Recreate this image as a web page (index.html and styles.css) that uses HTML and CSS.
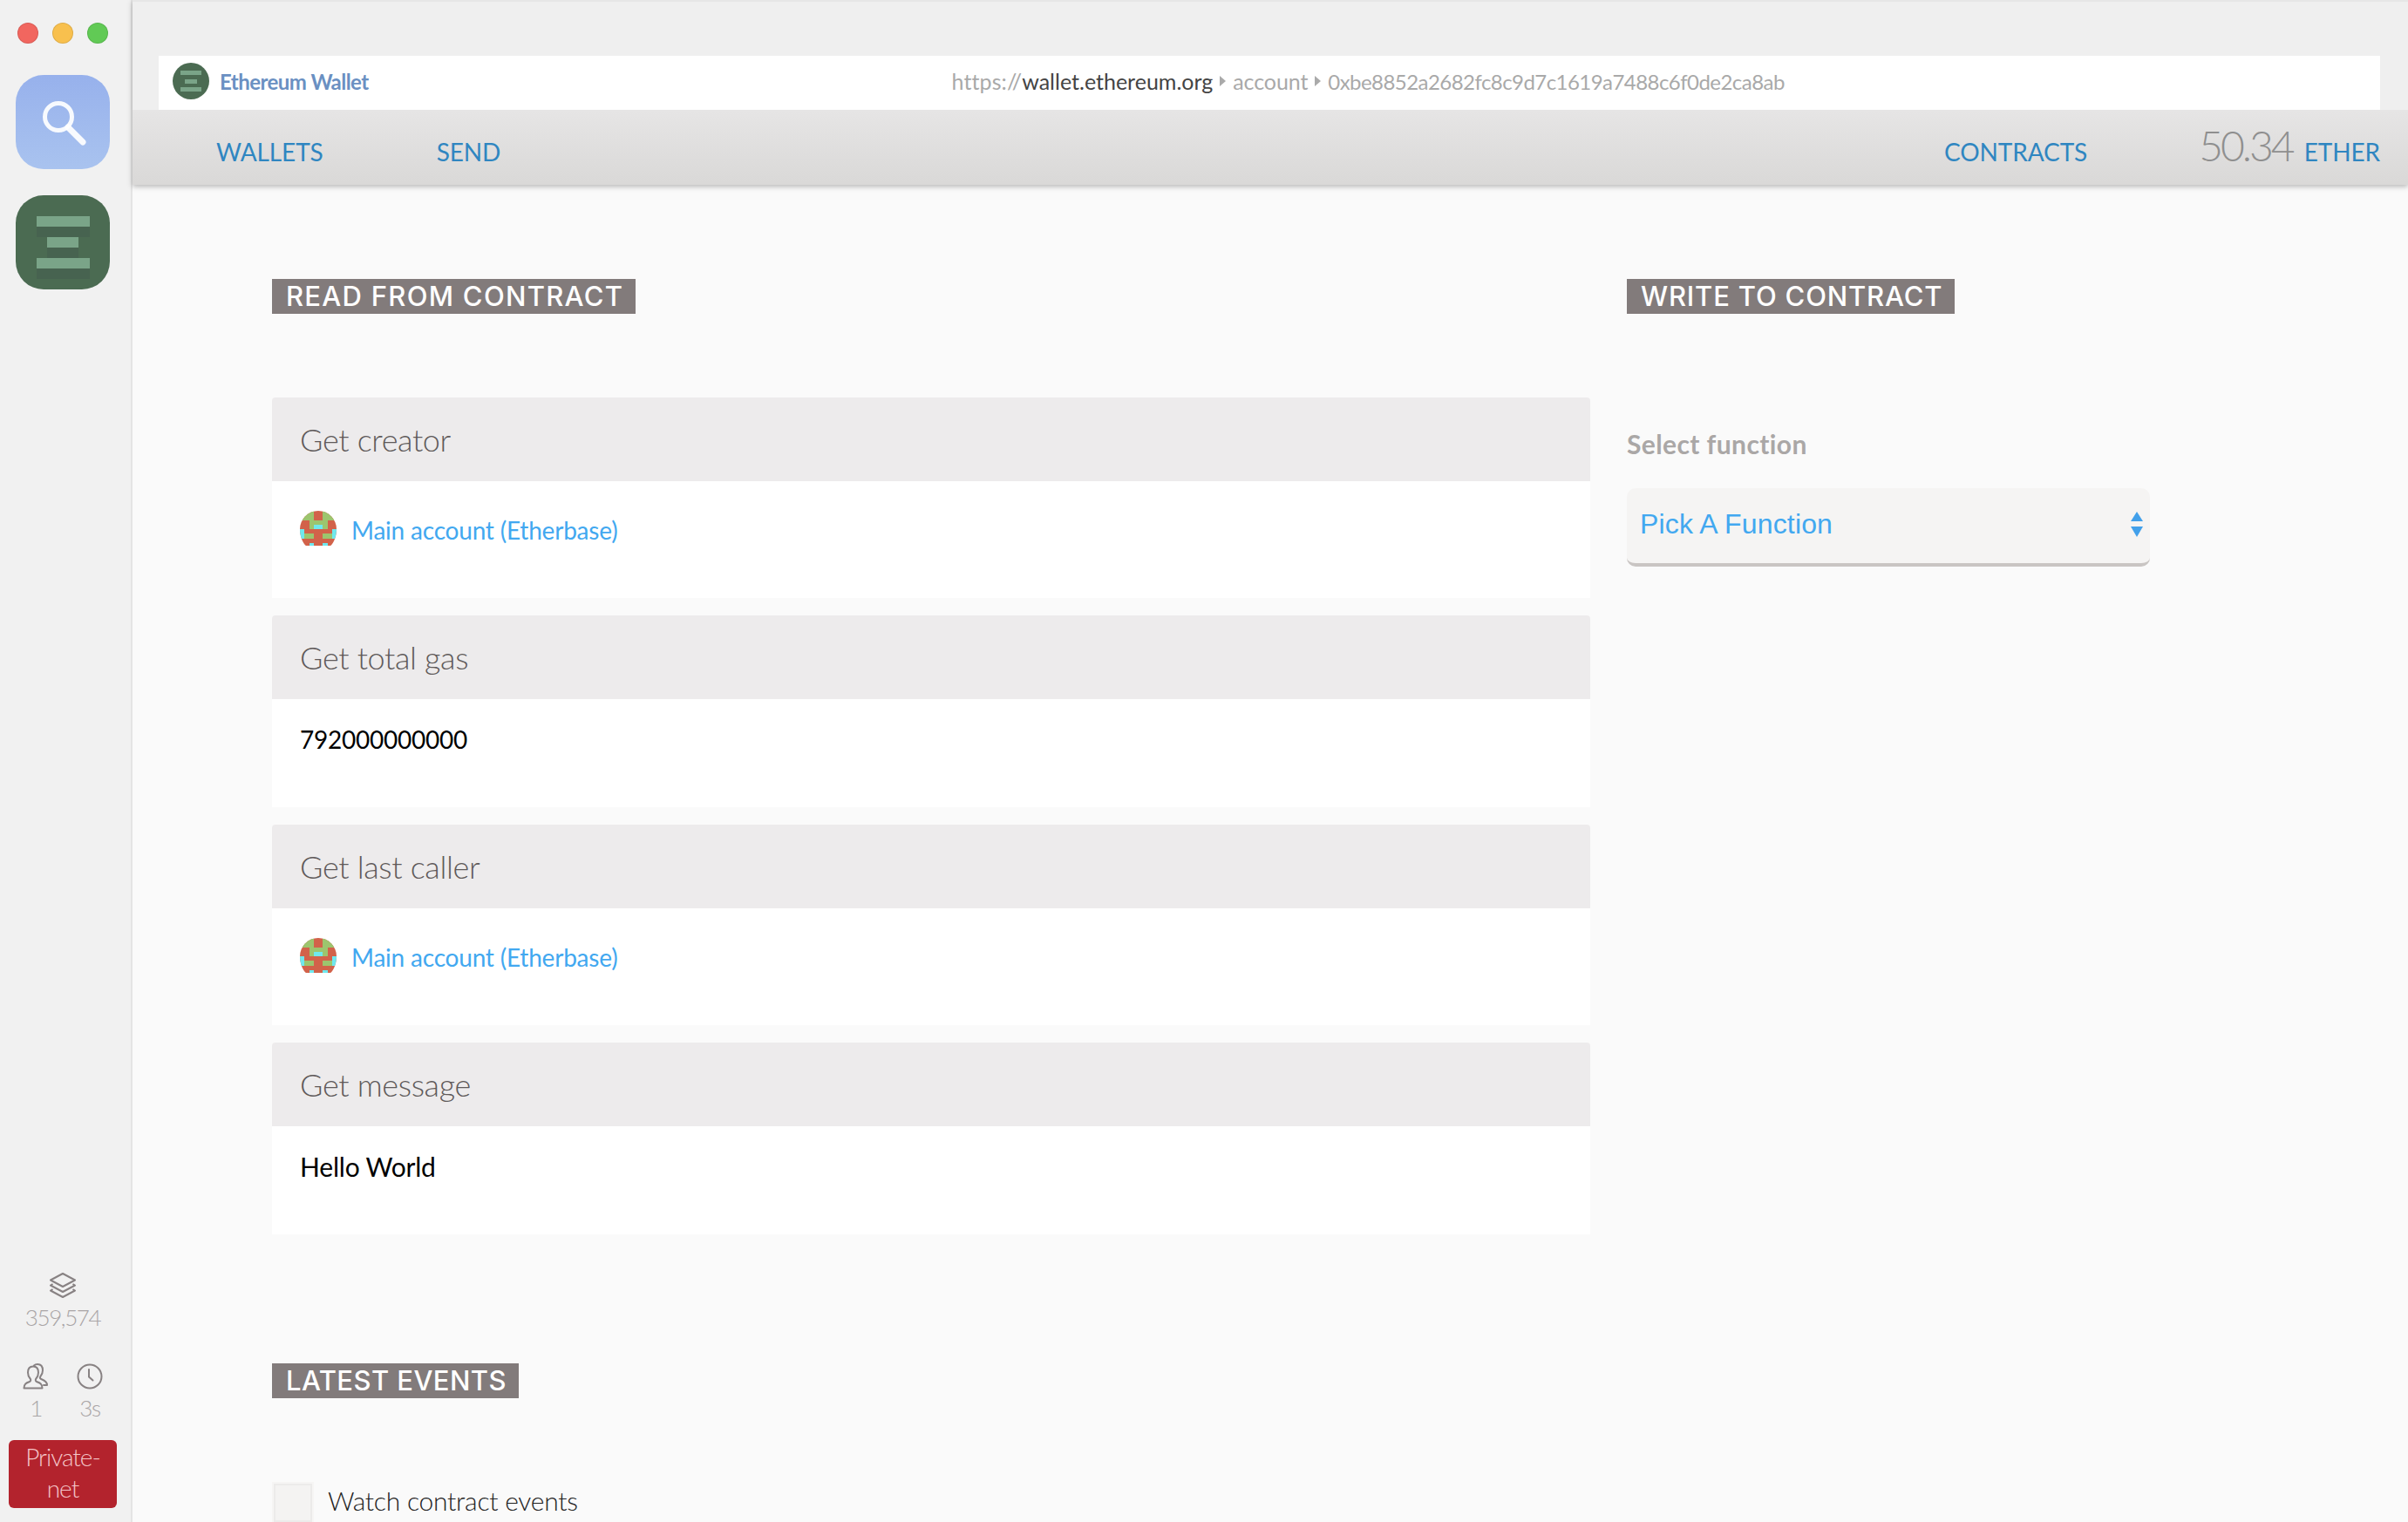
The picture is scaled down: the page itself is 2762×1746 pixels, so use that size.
FILE: index.html
```html
<!DOCTYPE html>
<html lang="en">
<head>
<meta charset="utf-8">
<title>Ethereum Wallet</title>
<link rel="stylesheet" href="styles.css">
</head>
<body>
<svg class="defs" width="0" height="0" aria-hidden="true">
  <defs>
    <clipPath id="idclip"><path d="M0 4a4 4 0 0 1 8 0v0c0 1.4-.5 2.9-1.3 3.62H1.3C.5 6.9 0 5.4 0 4z"/></clipPath>
    <symbol id="identicon" viewBox="0 0 8 8" shape-rendering="crispEdges">
      <g clip-path="url(#idclip)">
        <rect width="8" height="8" fill="#d2624a"/>
        <rect x="0" y="0" width="3" height="2" fill="#9cc56e"/>
        <rect x="5" y="0" width="3" height="2" fill="#9cc56e"/>
        <rect x="2" y="2" width="4" height="1" fill="#9cc56e"/>
        <rect x="2" y="3" width="1" height="1" fill="#9cc56e"/>
        <rect x="5" y="3" width="1" height="1" fill="#9cc56e"/>
        <rect x="3" y="3" width="2" height="1" fill="#6fe8ee"/>
        <rect x="0" y="4" width="1" height="2" fill="#6fe8ee"/>
        <rect x="7" y="4" width="1" height="2" fill="#6fe8ee"/>
        <rect x="1" y="5" width="2" height="1" fill="#9cc56e"/>
        <rect x="5" y="5" width="2" height="1" fill="#9cc56e"/>
        <rect x="2" y="7" width="1" height="1" fill="#6fe8ee"/>
        <rect x="5" y="7" width="1" height="1" fill="#6fe8ee"/>
      </g>
    </symbol>
  </defs>
</svg>
<div class="app">
  <aside class="sidebar">
    <div class="lights">
      <span class="light light-red"></span>
      <span class="light light-yellow"></span>
      <span class="light light-green"></span>
    </div>
    <div class="tab tab-search">
      <svg class="search-icon" width="108" height="108" viewBox="0 0 108 108">
        <circle cx="49" cy="48" r="15.5" fill="none" stroke="#fff" stroke-opacity=".92" stroke-width="5"/>
        <path d="M60 60l17 17" stroke="#fff" stroke-opacity=".92" stroke-width="7" stroke-linecap="round"/>
      </svg>
    </div>
    <div class="tab tab-wallet">
      <svg width="108" height="108" viewBox="0 0 108 108" shape-rendering="crispEdges">
        <rect x="23.500" y="36" width="61" height="12" fill="#476350"/>
        <rect x="36" y="60" width="36" height="12" fill="#476350"/>
        <rect x="23.500" y="84" width="61" height="12" fill="#476350"/>
        <rect x="23.500" y="24" width="61" height="12" fill="#7aa488"/>
        <rect x="36" y="48" width="36" height="12" fill="#7aa488"/>
        <rect x="23.500" y="72" width="61" height="12" fill="#7aa488"/>
      </svg>
    </div>
    <div class="stats">
      <div class="stat">
        <svg width="30" height="30" viewBox="0 0 30 30" fill="none" stroke="#888283" stroke-width="2" stroke-linejoin="round">
          <path d="M15 1L29 8.500 15 16 1 8.500z"/>
          <path d="M3.500 13L1 14.500 15 22l14-7.500-2.500-1.500"/>
          <path d="M3.500 19L1 20.500 15 28l14-7.500-2.500-1.500"/>
        </svg>
        <span class="stat-value">359,574</span>
      </div>
      <div class="stat-row">
        <div class="stat">
          <svg width="30" height="30" viewBox="0 0 30 30" fill="none" stroke="#888283" stroke-width="2" stroke-linejoin="round" stroke-linecap="round">
            <path d="M1.500 28.500c0-5 2.500-6 6.500-7.500 1.500-.6 1.500-2.500.6-3.500C7 15.700 6 13.500 6 10.500 6 6 8.500 3.500 12 3.500s6 2.500 6 7c0 3-1 5.200-2.600 7-.9 1-.9 2.900.6 3.500 4 1.500 6.500 2.500 6.500 7.500z"/>
            <path d="M13 2.500C14 1.500 15.500 1 17 1c3.500 0 6 2.500 6 7 0 3-1 5.200-2.600 7-.6.8-.7 2 .3 2.800 3 1.200 7.300 2.200 7.300 7.200h-4"/>
          </svg>
          <span class="stat-value">1</span>
        </div>
        <div class="stat">
          <svg width="30" height="30" viewBox="0 0 30 30" fill="none" stroke="#888283" stroke-width="2" stroke-linecap="round">
            <circle cx="15" cy="15" r="13.500"/>
            <path d="M14 7v8.500l4.500 4"/>
          </svg>
          <span class="stat-value">3s</span>
        </div>
      </div>
      <div class="network">Private-<br>net</div>
    </div>
  </aside>
  <main class="main">
    <header class="topbar">
      <div class="urlbar">
        <svg class="brand-logo" width="42" height="42" viewBox="0 0 42 42" shape-rendering="geometricPrecision">
          <circle cx="21" cy="21" r="21" fill="#4b6b52"/>
          <rect x="9" y="9" width="24" height="5" fill="#7aa488"/>
          <rect x="14" y="19" width="14" height="5" fill="#7aa488"/>
          <rect x="9" y="28" width="24" height="5" fill="#7aa488"/>
        </svg>
        <span class="brand-name">Ethereum Wallet</span>
        <div class="url">
          <span>https://</span><span class="url-host">wallet.ethereum.org</span>
          <i class="crumb"></i><span class="url-path">account</span>
          <i class="crumb"></i><span class="url-hash">0xbe8852a2682fc8c9d7c1619a7488c6f0de2ca8ab</span>
        </div>
      </div>
      <nav class="nav">
        <a class="nav-link">WALLETS</a>
        <a class="nav-link nav-send">SEND</a>
        <a class="nav-link nav-contracts">CONTRACTS</a>
        <div class="balance"><span class="balance-num">50.34</span><span class="nav-link">ETHER</span></div>
      </nav>
    </header>
    <div class="content">
      <div class="columns">
        <section class="read">
          <h2 class="tag tag-read">READ FROM CONTRACT</h2>
          <div class="cards">
            <article class="card">
              <h3 class="card-head">Get creator</h3>
              <div class="card-body card-body-account">
                <svg class="identicon" width="42" height="42"><use href="#identicon"/></svg>
                <a class="account">Main account (Etherbase)</a>
              </div>
            </article>
            <article class="card">
              <h3 class="card-head">Get total gas</h3>
              <div class="card-body card-body-num">792000000000</div>
            </article>
            <article class="card">
              <h3 class="card-head">Get last caller</h3>
              <div class="card-body card-body-account">
                <svg class="identicon" width="42" height="42"><use href="#identicon"/></svg>
                <a class="account">Main account (Etherbase)</a>
              </div>
            </article>
            <article class="card">
              <h3 class="card-head">Get message</h3>
              <div class="card-body">Hello World</div>
            </article>
          </div>
        </section>
        <section class="write">
          <h2 class="tag tag-write">WRITE TO CONTRACT</h2>
          <div class="field-label">Select function</div>
          <div class="select">
            <span>Pick A Function</span>
            <span class="select-arrows"><i class="arrow-up"></i><i class="arrow-down"></i></span>
          </div>
        </section>
      </div>
      <section class="events">
        <h2 class="tag tag-events">LATEST EVENTS</h2>
        <label class="watch"><span class="checkbox"></span><span>Watch contract events</span></label>
      </section>
    </div>
  </main>
</div>
</body>
</html>
```

FILE: styles.css
```css
* { box-sizing: border-box; }
html, body { margin: 0; padding: 0; height: 100%; overflow: hidden; }
body { font-family: "Lato", "Open Sans", sans-serif; background: #fafafa; color: #000; }
.defs { position: absolute; }
.app { display: flex; width: 2762px; height: 1746px; overflow: hidden; }

/* sidebar */
.sidebar { width: 152px; flex: none; height: 100%; background: #f1f1f1; border-right: 2px solid #e4e4e4; display: flex; flex-direction: column; align-items: center; padding: 26px 6px 16px 0; }
.lights { display: flex; gap: 16px; width: 104px; }
.light { width: 24px; height: 24px; border-radius: 50%; border: 1px solid rgba(0,0,0,.1); }
.light-red { background: #f1665f; }
.light-yellow { background: #f8c04e; }
.light-green { background: #61ca55; }
.tab { width: 108px; height: 108px; border-radius: 32px; flex: none; }
.tab svg { display: block; }
.tab-search { margin-top: 36px; background: linear-gradient(#97b1ec, #a9c3ef); }
.tab-wallet { margin-top: 30px; background: #4b6b52; }
.stats { margin-top: auto; display: flex; flex-direction: column; align-items: center; width: 100%; }
.stat { display: flex; flex-direction: column; align-items: center; }
.stat svg { display: block; }
.stat-value { font-weight: 300; font-size: 26px; line-height: 34px; margin-top: 4px; color: #a9a5a6; letter-spacing: -1.4px; }
.stat-row { display: flex; justify-content: space-between; width: 92px; margin-top: 36px; }
.network { width: 124px; height: 78px; margin-top: 20px; background: #b3232d; border-radius: 6px; color: #f3c5c8; font-weight: 300; font-size: 28px; line-height: 36px; text-align: center; padding-top: 1px; letter-spacing: -1px; }

/* top */
.main { flex: 1; min-width: 0; display: flex; flex-direction: column; }
.topbar { background: #efefef; border-top: 2px solid #e6e6e6; padding-top: 62px; box-shadow: 0 2px 6px rgba(0,0,0,.28); position: relative; }
.urlbar { display: flex; align-items: center; height: 62px; margin: 0 32px 0 30px; padding: 0 0 4px 16px; background: #fff; }
.brand-logo { flex: none; }
.brand-name { margin-left: 12px; font-size: 24px; font-weight: 700; color: #6a90c2; letter-spacing: -.55px; }
.url { margin-left: 669px; display: flex; align-items: center; font-size: 25px; font-weight: 400; color: #a9a9a9; letter-spacing: .1px; white-space: nowrap; }
.url-host { color: #444; letter-spacing: 0; }
.url-path { letter-spacing: -.1px; }
.url-hash { font-size: 24px; letter-spacing: -.55px; }
.crumb { width: 0; height: 0; margin: 0 8px; border-left: 7px solid #aaa; border-top: 6px solid transparent; border-bottom: 6px solid transparent; }
.nav { display: flex; align-items: baseline; height: 86px; padding: 21px 32px 0 96px; background: linear-gradient(#e6e5e5, #dad9d8 95%); }
.nav-link { font-size: 28px; line-height: 40px; color: #2f86c1; letter-spacing: -.1px; }
.nav-send { margin-left: 130px; }
.nav-contracts { margin-left: auto; }
.balance { display: flex; align-items: baseline; margin-left: 128px; gap: 13px; }
.balance-num { font-size: 48px; line-height: 40px; font-weight: 300; color: #8f8f8f; letter-spacing: -3px; }

/* content */
.content { padding: 108px 0 0 160px; flex: 1; min-height: 0; }
.columns { display: grid; grid-template-columns: 1512px 600px; column-gap: 42px; }
.tag { display: inline-block; margin: 0; height: 40px; padding: 0 14px 0 16px; background: #827b7b; color: #fff; font-family: "Inter", sans-serif; font-size: 31px; font-weight: 500; line-height: 40px; white-space: nowrap; vertical-align: top; }
.tag-read { letter-spacing: 1.28px; }
.tag-write { letter-spacing: .83px; }
.tag-events { letter-spacing: .43px; }
.cards { margin-top: 96px; display: flex; flex-direction: column; gap: 20px; }
.card-head { margin: 0; height: 96px; padding-left: 32px; background: #edebec; border-radius: 4px 4px 0 0; font-size: 36px; font-weight: 300; line-height: 96px; color: #5f5a5a; letter-spacing: -.35px; }
.card-body { background: #fff; padding: 26px 32px 58px; font-size: 30px; line-height: 40px; letter-spacing: -.2px; }
.card-body-num { font-size: 28px; letter-spacing: -.25px; }
.card-body-account { display: flex; align-items: flex-start; gap: 17px; height: 134px; padding: 34px 32px 0; }
.identicon { flex: none; display: block; }
.account { color: #42a8f0; font-size: 28px; line-height: 40px; letter-spacing: -.2px; padding-top: 2px; }

/* write */
.field-label { margin-top: 129px; font-size: 30px; line-height: 40px; font-weight: 700; color: #aaa7a6; letter-spacing: .4px; }
.select { margin-top: 31px; height: 90px; display: flex; align-items: center; justify-content: space-between; padding: 0 8px 4px 15px; background: #f5f4f3; border-bottom: 4px solid #c9c5c3; border-radius: 10px; font-family: "Liberation Sans", Arial, sans-serif; font-size: 32px; letter-spacing: .15px; color: #42a8f0; }
.select-arrows { display: flex; flex-direction: column; gap: 6px; }
.arrow-up, .arrow-down { display: block; width: 0; height: 0; border-left: 7px solid transparent; border-right: 7px solid transparent; }
.arrow-up { border-bottom: 11px solid #42a0ea; }
.arrow-down { border-top: 12px solid #42a0ea; }

/* events */
.events { margin-top: 148px; }
.watch { display: flex; align-items: flex-start; gap: 16px; margin-top: 96px; font-size: 30px; line-height: 42px; font-weight: 300; color: #222; letter-spacing: -.25px; }
.checkbox { width: 48px; height: 48px; flex: none; background: #f4f3f2; border: 2px solid #f6f5f4; box-shadow: inset 0 0 0 2px #ecebea; }
```
